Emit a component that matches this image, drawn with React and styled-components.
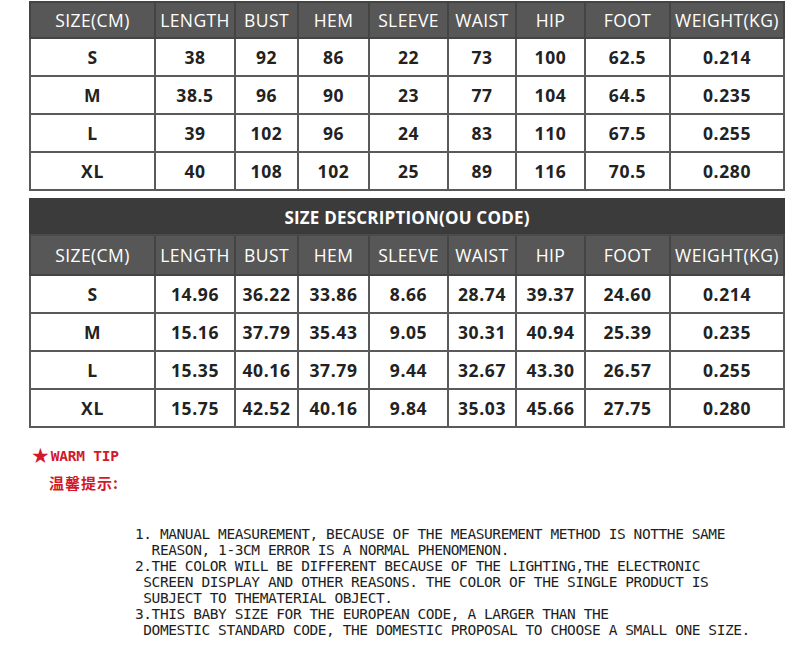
import React from 'react';
import styled, { createGlobalStyle } from 'styled-components';

const GlobalStyle = createGlobalStyle`
  body {
    margin: 0;
    background: #fff;
  }
`;

const COLS = [125, 80, 63, 71, 79, 68, 69, 85, 114];
const HEAD = ['SIZE(CM)', 'LENGTH', 'BUST', 'HEM', 'SLEEVE', 'WAIST', 'HIP', 'FOOT', 'WEIGHT(KG)'];

const CM_ROWS = [
  ['S', '38', '92', '86', '22', '73', '100', '62.5', '0.214'],
  ['M', '38.5', '96', '90', '23', '77', '104', '64.5', '0.235'],
  ['L', '39', '102', '96', '24', '83', '110', '67.5', '0.255'],
  ['XL', '40', '108', '102', '25', '89', '116', '70.5', '0.280'],
];

const INCH_ROWS = [
  ['S', '14.96', '36.22', '33.86', '8.66', '28.74', '39.37', '24.60', '0.214'],
  ['M', '15.16', '37.79', '35.43', '9.05', '30.31', '40.94', '25.39', '0.235'],
  ['L', '15.35', '40.16', '37.79', '9.44', '32.67', '43.30', '26.57', '0.255'],
  ['XL', '15.75', '42.52', '40.16', '9.84', '35.03', '45.66', '27.75', '0.280'],
];

const TIPS = [
  '1. MANUAL MEASUREMENT, BECAUSE OF THE MEASUREMENT METHOD IS NOTTHE SAME',
  '  REASON, 1-3CM ERROR IS A NORMAL PHENOMENON.',
  '2.THE COLOR WILL BE DIFFERENT BECAUSE OF THE LIGHTING,THE ELECTRONIC',
  ' SCREEN DISPLAY AND OTHER REASONS. THE COLOR OF THE SINGLE PRODUCT IS',
  ' SUBJECT TO THEMATERIAL OBJECT.',
  '3.THIS BABY SIZE FOR THE EUROPEAN CODE, A LARGER THAN THE',
  ' DOMESTIC STANDARD CODE, THE DOMESTIC PROPOSAL TO CHOOSE A SMALL ONE SIZE.',
];

const Page = styled.div`
  width: 755px;
  padding: 1px 0 0 29px;
  display: flex;
  flex-direction: column;
`;

const Table = styled.table`
  width: 755px;
  table-layout: fixed;
  border-collapse: collapse;
  margin-top: ${p => p.gap || 0}px;
  font-family: "Open Sans", "Liberation Sans", sans-serif;
`;

const TitleCell = styled.th`
  height: 34px;
  padding: 0;
  background: #3b3b3b;
  border: 2px solid #3b3b3b;
  border-bottom-color: #4a4a4a;
  color: #fff;
  font-size: 17px;
  font-weight: 700;
  letter-spacing: 0.2px;
  text-align: center;
`;

const HeadCell = styled.th`
  height: ${p => p.h}px;
  padding: 0;
  background: #575757;
  border: 2px solid #444;
  color: #fff;
  font-size: 17.5px;
  font-weight: 400;
  letter-spacing: 0.4px;
  text-align: center;
  white-space: nowrap;
`;

const Cell = styled.td`
  height: 36px;
  padding: 0;
  background: #fff;
  border: 2px solid #5a5a5a;
  color: #222;
  font-size: 17.5px;
  font-weight: 700;
  letter-spacing: 0.6px;
  text-align: center;
`;

const Tip = styled.div`
  margin: 18px 0 0 2px;
  display: flex;
  flex-direction: column;
  color: #d3182b;
`;

const TipTitle = styled.div`
  display: flex;
  align-items: center;
  gap: 1px;
  font-family: "DejaVu Sans Mono", "Liberation Mono", monospace;
  font-size: 14.5px;
  font-weight: 700;
  letter-spacing: -0.2px;
  line-height: 20px;
`;

const Star = styled.span`
  font-family: "DejaVu Sans", sans-serif;
  font-size: 21px;
  line-height: 20px;
`;

const TipCn = styled.div`
  margin: 8px 0 0 18px;
  font-family: "Noto Sans CJK SC", sans-serif;
  font-size: 15px;
  font-weight: 700;
  line-height: 18px;
  letter-spacing: 1px;
`;

const Notes = styled.div`
  margin: 34px 0 0 106px;
  font-family: "DejaVu Sans Mono", "Liberation Mono", monospace;
  font-size: 14.5px;
  letter-spacing: -0.42px;
  line-height: 16px;
  color: #1e1e1e;
  white-space: pre;
`;

function SizeTable({ rows, title, gap }) {
  return (
    <Table gap={gap}>
      <colgroup>
        {COLS.map((w, i) => <col key={i} style={{ width: w }} />)}
      </colgroup>
      <thead>
        {title && (
          <tr>
            <TitleCell colSpan={9}>{title}</TitleCell>
          </tr>
        )}
        <tr>
          {HEAD.map(h => <HeadCell key={h} h={title ? 38 : 34}>{h}</HeadCell>)}
        </tr>
      </thead>
      <tbody>
        {rows.map(r => (
          <tr key={r[0]}>
            {r.map((v, i) => <Cell key={i}>{v}</Cell>)}
          </tr>
        ))}
      </tbody>
    </Table>
  );
}

export default function App() {
  return (
    <>
      <GlobalStyle />
      <Page>
        <SizeTable rows={CM_ROWS} />
        <SizeTable rows={INCH_ROWS} title="SIZE DESCRIPTION(OU CODE)" gap={7} />
        <Tip>
          <TipTitle><Star>★</Star>WARM TIP</TipTitle>
          <TipCn>温馨提示:</TipCn>
        </Tip>
        <Notes>{TIPS.join('\n')}</Notes>
      </Page>
    </>
  );
}
